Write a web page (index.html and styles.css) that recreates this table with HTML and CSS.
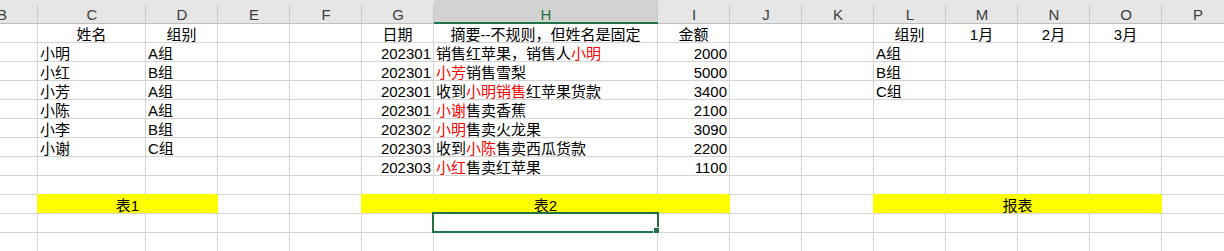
FILE: index.html
```html
<!DOCTYPE html>
<html>
    <head>
        <title>销售汇总</title>
        <link rel="stylesheet" href="styles.css">
    </head>
    <body>
        <div class="sheet">
            <!-- column letters -->
            <div class="hd">B</div>
            <div class="hd">C</div>
            <div class="hd">D</div>
            <div class="hd">E</div>
            <div class="hd">F</div>
            <div class="hd">G</div>
            <div class="hd hd-active">H</div>
            <div class="hd">I</div>
            <div class="hd">J</div>
            <div class="hd">K</div>
            <div class="hd">L</div>
            <div class="hd">M</div>
            <div class="hd">N</div>
            <div class="hd">O</div>
            <div class="hd">P</div>

            <!-- row 1 -->
            <div class="c"></div>
            <div class="c mid">姓名</div>
            <div class="c mid">组别</div>
            <div class="c"></div>
            <div class="c"></div>
            <div class="c mid">日期</div>
            <div class="c mid">摘要--不规则，但姓名是固定</div>
            <div class="c mid">金额</div>
            <div class="c"></div>
            <div class="c"></div>
            <div class="c mid">组别</div>
            <div class="c mid">1月</div>
            <div class="c mid">2月</div>
            <div class="c mid">3月</div>
            <div class="c"></div>

            <!-- row 2 -->
            <div class="c"></div>
            <div class="c">小明</div>
            <div class="c">A组</div>
            <div class="c"></div>
            <div class="c"></div>
            <div class="c num">202301</div>
            <div class="c">销售红苹果，销售人<span class="red">小明</span></div>
            <div class="c num">2000</div>
            <div class="c"></div>
            <div class="c"></div>
            <div class="c">A组</div>
            <div class="c"></div>
            <div class="c"></div>
            <div class="c"></div>
            <div class="c"></div>

            <!-- row 3 -->
            <div class="c"></div>
            <div class="c">小红</div>
            <div class="c">B组</div>
            <div class="c"></div>
            <div class="c"></div>
            <div class="c num">202301</div>
            <div class="c"><span class="red">小芳</span>销售雪梨</div>
            <div class="c num">5000</div>
            <div class="c"></div>
            <div class="c"></div>
            <div class="c">B组</div>
            <div class="c"></div>
            <div class="c"></div>
            <div class="c"></div>
            <div class="c"></div>

            <!-- row 4 -->
            <div class="c"></div>
            <div class="c">小芳</div>
            <div class="c">A组</div>
            <div class="c"></div>
            <div class="c"></div>
            <div class="c num">202301</div>
            <div class="c">收到<span class="red">小明销售</span>红苹果货款</div>
            <div class="c num">3400</div>
            <div class="c"></div>
            <div class="c"></div>
            <div class="c">C组</div>
            <div class="c"></div>
            <div class="c"></div>
            <div class="c"></div>
            <div class="c"></div>

            <!-- row 5 -->
            <div class="c"></div>
            <div class="c">小陈</div>
            <div class="c">A组</div>
            <div class="c"></div>
            <div class="c"></div>
            <div class="c num">202301</div>
            <div class="c"><span class="red">小谢</span>售卖香蕉</div>
            <div class="c num">2100</div>
            <div class="c"></div>
            <div class="c"></div>
            <div class="c"></div>
            <div class="c"></div>
            <div class="c"></div>
            <div class="c"></div>
            <div class="c"></div>

            <!-- row 6 -->
            <div class="c"></div>
            <div class="c">小李</div>
            <div class="c">B组</div>
            <div class="c"></div>
            <div class="c"></div>
            <div class="c num">202302</div>
            <div class="c"><span class="red">小明</span>售卖火龙果</div>
            <div class="c num">3090</div>
            <div class="c"></div>
            <div class="c"></div>
            <div class="c"></div>
            <div class="c"></div>
            <div class="c"></div>
            <div class="c"></div>
            <div class="c"></div>

            <!-- row 7 -->
            <div class="c"></div>
            <div class="c">小谢</div>
            <div class="c">C组</div>
            <div class="c"></div>
            <div class="c"></div>
            <div class="c num">202303</div>
            <div class="c">收到<span class="red">小陈</span>售卖西瓜货款</div>
            <div class="c num">2200</div>
            <div class="c"></div>
            <div class="c"></div>
            <div class="c"></div>
            <div class="c"></div>
            <div class="c"></div>
            <div class="c"></div>
            <div class="c"></div>

            <!-- row 8 -->
            <div class="c"></div>
            <div class="c"></div>
            <div class="c"></div>
            <div class="c"></div>
            <div class="c"></div>
            <div class="c num">202303</div>
            <div class="c"><span class="red">小红</span>售卖红苹果</div>
            <div class="c num">1100</div>
            <div class="c"></div>
            <div class="c"></div>
            <div class="c"></div>
            <div class="c"></div>
            <div class="c"></div>
            <div class="c"></div>
            <div class="c"></div>

            <!-- row 9 -->
            <div class="c"></div>
            <div class="c"></div>
            <div class="c"></div>
            <div class="c"></div>
            <div class="c"></div>
            <div class="c"></div>
            <div class="c"></div>
            <div class="c"></div>
            <div class="c"></div>
            <div class="c"></div>
            <div class="c"></div>
            <div class="c"></div>
            <div class="c"></div>
            <div class="c"></div>
            <div class="c"></div>

            <!-- row 10: table titles -->
            <div class="c"></div>
            <div class="c mid title span2">表1</div>
            <div class="c"></div>
            <div class="c"></div>
            <div class="c mid title span3">表2</div>
            <div class="c"></div>
            <div class="c"></div>
            <div class="c mid title span4">报表</div>
            <div class="c"></div>

            <!-- row 11 -->
            <div class="c"></div>
            <div class="c"></div>
            <div class="c"></div>
            <div class="c"></div>
            <div class="c"></div>
            <div class="c"></div>
            <div class="c selected"></div>
            <div class="c"></div>
            <div class="c"></div>
            <div class="c"></div>
            <div class="c"></div>
            <div class="c"></div>
            <div class="c"></div>
            <div class="c"></div>
            <div class="c"></div>

            <!-- row 12 -->
            <div class="c"></div>
            <div class="c"></div>
            <div class="c"></div>
            <div class="c"></div>
            <div class="c"></div>
            <div class="c"></div>
            <div class="c"></div>
            <div class="c"></div>
            <div class="c"></div>
            <div class="c"></div>
            <div class="c"></div>
            <div class="c"></div>
            <div class="c"></div>
            <div class="c"></div>
            <div class="c"></div>
        </div>
    </body>
</html>
```

FILE: styles.css
```css
body{
    margin: 0;
    background-color: white;
    overflow: hidden;
    font-family: "Liberation Sans", "Noto Sans CJK SC", sans-serif;
}
.sheet{
    display: grid;
    grid-template-columns: 72px 108px repeat(4, 72px) 224px repeat(8, 72px);
    grid-template-rows: 24px repeat(12, 19px);
    width: max-content;
    /* column B is scrolled half out of view */
    margin-left: -34px;
}
.hd{
    position: relative;
    box-sizing: border-box;
    background-color: #e6e6e6;
    border-bottom: 1px solid #bfbfbf;
    color: #3c3c3c;
    font-size: 15px;
    line-height: 16px;
    padding-top: 7px;
    text-align: center;
}
.hd::after{
    content: '';
    position: absolute;
    right: 0;
    top: 5px;
    bottom: 0;
    width: 1px;
    background-color: #c8c8c8;
}
.hd-active{
    background-color: #d2d2d2;
    border-bottom: 2px solid #217346;
    color: #217346;
}
.c{
    box-sizing: border-box;
    border-right: 1px solid #d4d4d4;
    border-bottom: 1px solid #d4d4d4;
    padding: 3px 2px 0 2px;
    font-size: 15px;
    line-height: 15px;
    color: black;
    white-space: nowrap;
    overflow: hidden;
}
.mid{
    text-align: center;
}
.num{
    text-align: right;
}
.red{
    color: #ff0000;
}
.title{
    background-color: #ffff00;
    border-right-color: #ffff00;
    box-shadow: -1px -1px 0 #ffff00;
}
.span2{
    grid-column: span 2;
}
.span3{
    grid-column: span 3;
}
.span4{
    grid-column: span 4;
}
.selected{
    position: relative;
    overflow: visible;
}
.selected::before{
    content: '';
    position: absolute;
    left: -2px;
    top: -2px;
    right: -2px;
    bottom: -1px;
    border: 2px solid #217346;
    z-index: 2;
}
/* fill handle */
.selected::after{
    content: '';
    position: absolute;
    right: -3px;
    bottom: -2px;
    width: 7px;
    height: 7px;
    box-sizing: border-box;
    background-color: #217346;
    border: 1px solid white;
    z-index: 3;
}
```
